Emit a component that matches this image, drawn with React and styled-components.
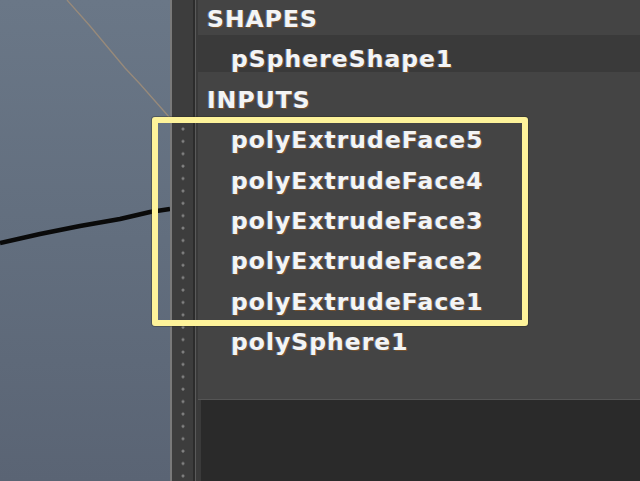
import React from "react";
import styled, { createGlobalStyle } from "styled-components";

const Global = createGlobalStyle`
  html, body { margin: 0; padding: 0; background: #2a2a2a; }
  body { width: 640px; height: 481px; overflow: hidden; }
  #root { width: 640px; height: 481px; }
`;

const Page = styled.div`
  position: relative;
  display: flex;
  width: 640px;
  height: 481px;
  overflow: hidden;
  font-family: "DejaVu Sans", "Liberation Sans", sans-serif;
`;

const Viewport = styled.div`
  position: relative;
  width: 170px;
  flex: none;
  background: linear-gradient(180deg, #6a7787 0%, #626e7e 50%, #5a6474 100%);
  overflow: hidden;
`;

const ViewDrawing = styled.svg`
  display: block;
  width: 170px;
  height: 481px;
`;

const ViewEdge = styled.div`
  width: 2px;
  flex: none;
  background: #7a7a7a;
`;

const Splitter = styled.div`
  width: 21px;
  flex: none;
  background: #3d3d3d;
  display: flex;
  flex-direction: column;
  align-items: center;
  padding-top: 126px;
  box-sizing: border-box;
`;

const Grip = styled.div`
  width: 6px;
  flex: 1;
  background-image: radial-gradient(circle at 3px 3px, #8c8c8c 0, #7a7a7a 1px, rgba(61,61,61,0) 2px);
  background-size: 6px 12.4px;
  background-repeat: repeat-y;
`;

const SplitLine = styled.div`
  width: 5px;
  flex: none;
  background: linear-gradient(90deg, #2c2c2c 0 2px, #5a5a5a 2px 3px, #3a3a3a 3px 5px);
`;

const Side = styled.div`
  flex: 1;
  display: flex;
  flex-direction: column;
  min-width: 0;
`;

const Panel = styled.div`
  height: 399px;
  flex: none;
  background: #444444;
  border-bottom: 1px solid #555555;
  overflow: hidden;
`;

const List = styled.div`
  margin-top: -5px;
  display: flex;
  flex-direction: column;
`;

const Row = styled.div`
  height: 40.4px;
  box-sizing: border-box;
  padding-top: 8px;
  padding-left: ${(p) => (p.$header ? "9px" : "33px")};
  line-height: 32px;
  font-size: 23.5px;
  font-weight: bold;
  letter-spacing: 1px;
  white-space: nowrap;
  color: #f4f4f4;
  text-shadow: -1px 0 0 rgba(110, 165, 255, 0.55), 1px 1px 0 rgba(150, 90, 30, 0.6);
  background: ${(p) =>
    p.$band ? "linear-gradient(180deg, #3a3a3a 0 37px, transparent 37px)" : "transparent"};
`;

const Bottom = styled.div`
  flex: 1;
  background: #2a2a2a;
  border-left: 3px solid #3a3a3a;
`;

const Highlight = styled.div`
  position: absolute;
  left: 152px;
  top: 117px;
  width: 376px;
  height: 209px;
  box-sizing: border-box;
  border: 6px solid #fef39a;
  border-radius: 3px;
  box-shadow: 0 0 0 1px rgba(40, 40, 30, 0.35);
  pointer-events: none;
`;

const rows = [
  { text: "SHAPES", header: true },
  { text: "pSphereShape1", band: true },
  { text: "INPUTS", header: true },
  { text: "polyExtrudeFace5" },
  { text: "polyExtrudeFace4" },
  { text: "polyExtrudeFace3" },
  { text: "polyExtrudeFace2" },
  { text: "polyExtrudeFace1" },
  { text: "polySphere1" },
];

export default function App() {
  return (
    <>
      <Global />
      <Page>
        <Viewport>
          <ViewDrawing viewBox="0 0 170 481">
            <polyline
              points="67,0 90,26 110,50 125,68 140,84 155,101 170,118"
              fill="none"
              stroke="#988a7a"
              strokeWidth="1.3"
            />
            <polyline
              points="0,243 40,234 80,226 120,219 150,212 170,209"
              fill="none"
              stroke="#0a0a0a"
              strokeWidth="4.5"
              strokeLinejoin="round"
            />
          </ViewDrawing>
        </Viewport>
        <ViewEdge />
        <Splitter>
          <Grip />
        </Splitter>
        <SplitLine />
        <Side>
          <Panel>
            <List>
              {rows.map((r) => (
                <Row key={r.text} $header={r.header} $band={r.band}>
                  {r.text}
                </Row>
              ))}
            </List>
          </Panel>
          <Bottom />
        </Side>
        <Highlight />
      </Page>
    </>
  );
}
